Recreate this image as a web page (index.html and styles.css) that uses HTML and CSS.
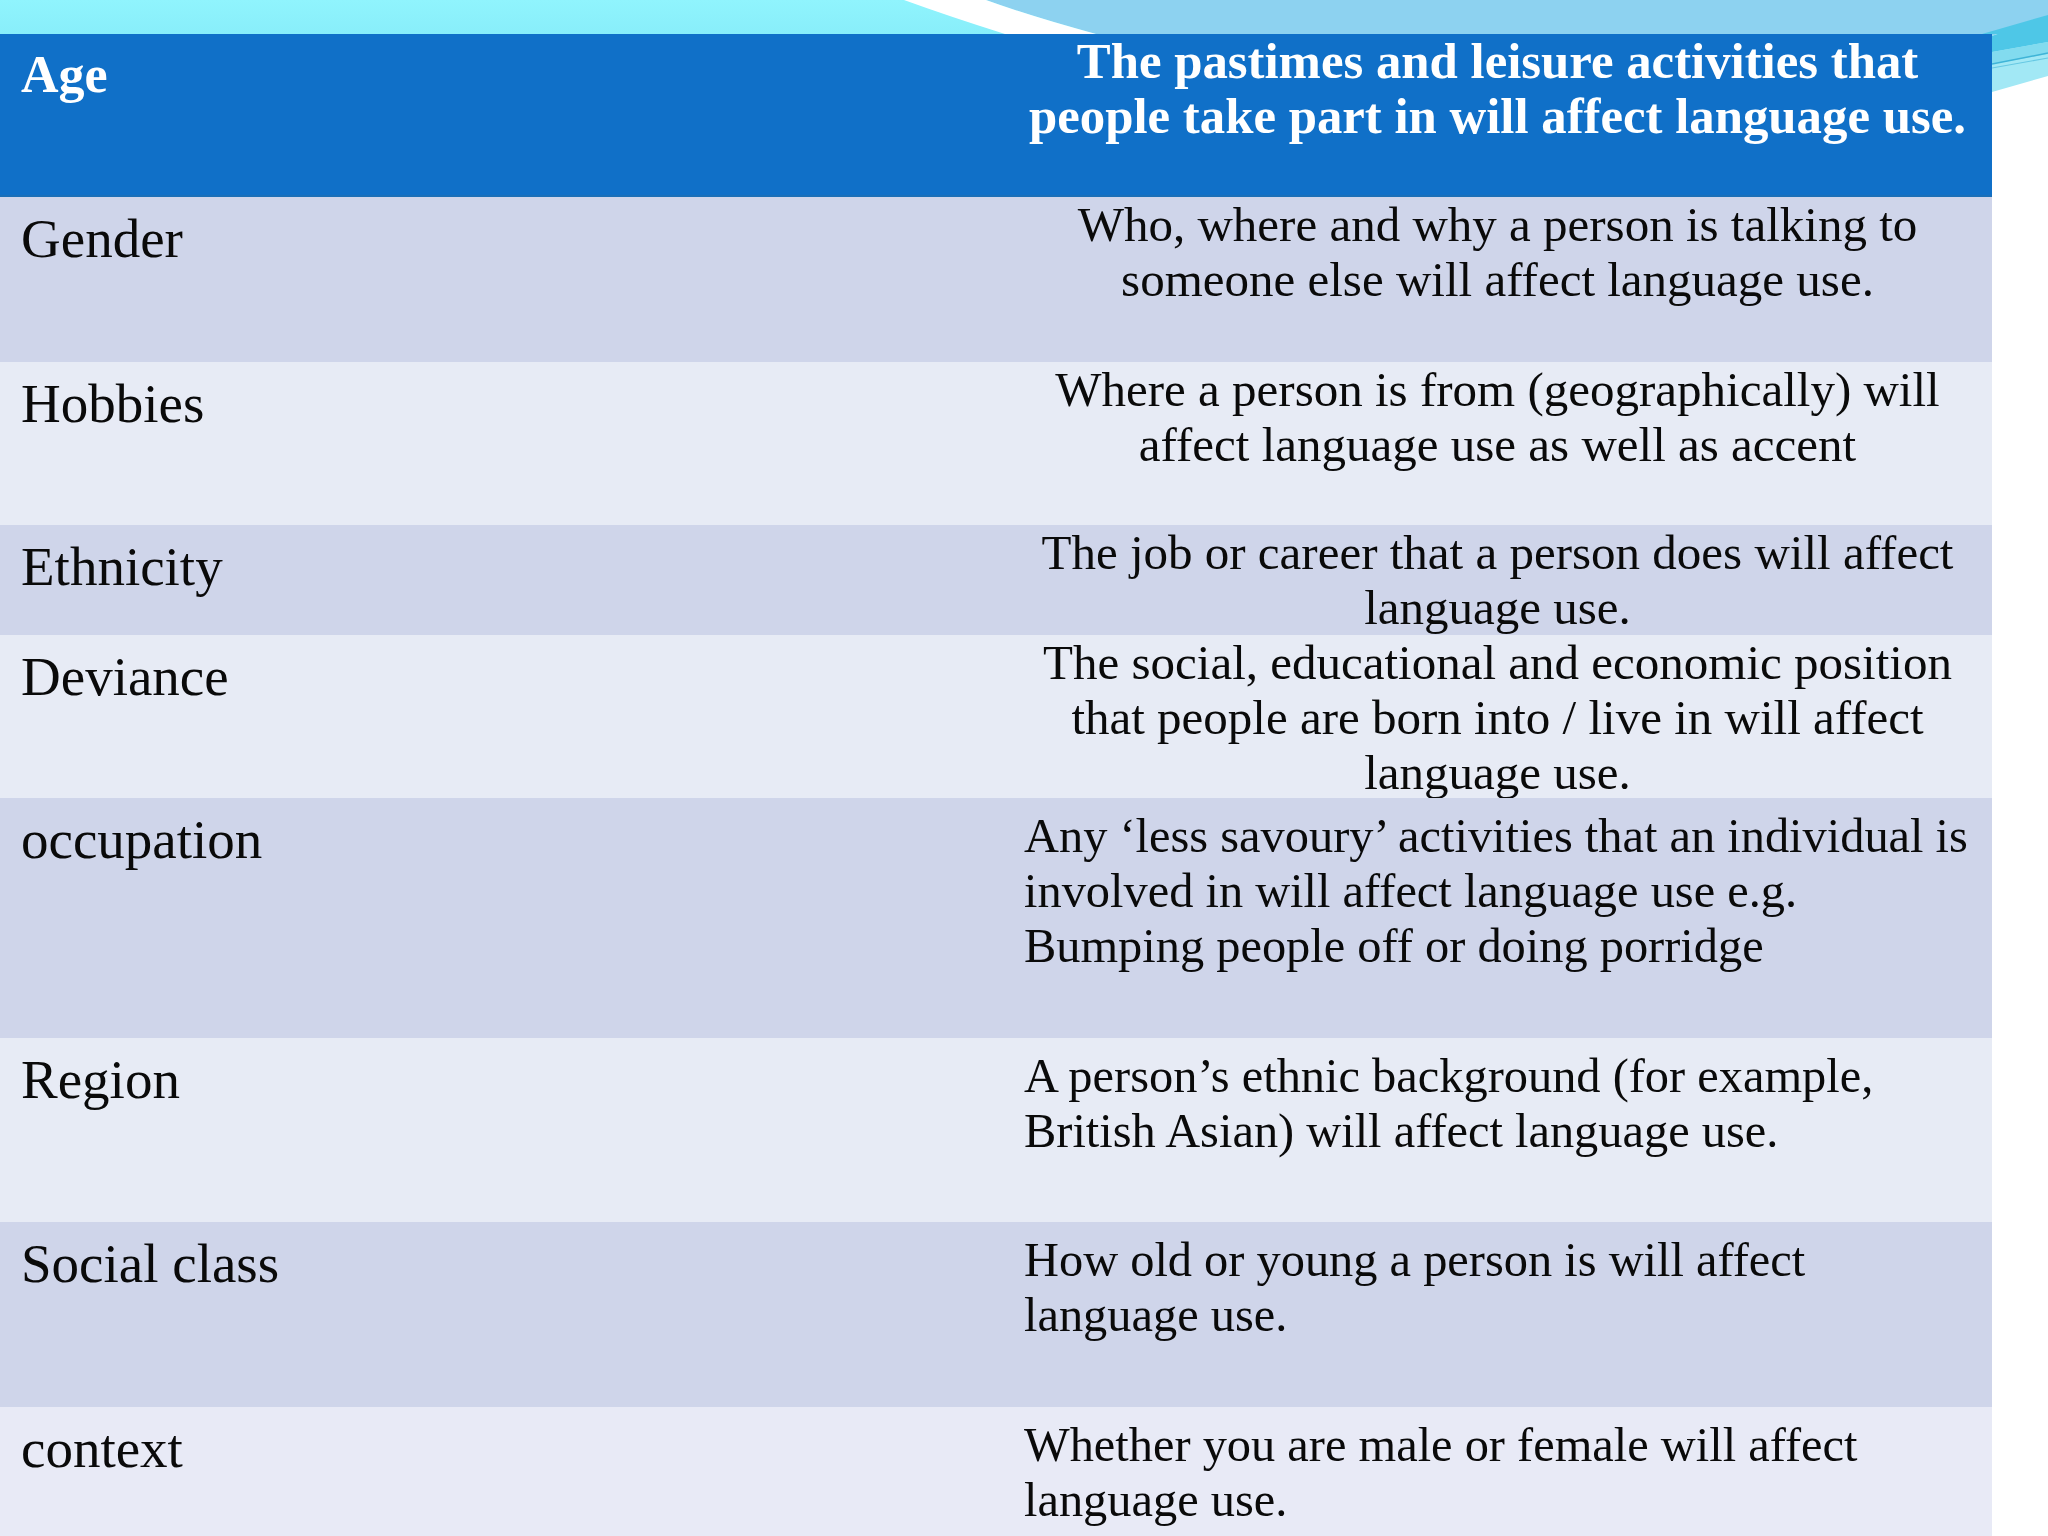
FILE: index.html
```html
<!DOCTYPE html>
<html lang="en">
<head>
<meta charset="utf-8">
<title>Language variation factors</title>
<link rel="stylesheet" href="styles.css">
</head>
<body>
<div class="page">
  <div class="top">
    <svg class="top-art" width="2048" height="34" viewBox="0 0 2048 34">
      <defs>
        <linearGradient id="cy" x1="0" y1="0" x2="0" y2="1">
          <stop offset="0" stop-color="#90f4fd"/>
          <stop offset="1" stop-color="#88eefa"/>
        </linearGradient>
      </defs>
      <rect x="0" y="0" width="2048" height="34" fill="url(#cy)"/>
      <path d="M986,0 L2048,0 L2048,34 L1096,34 Q1030,16 986,0 Z" fill="#8dd2f0"/>
      <path d="M904,0 L986,0 Q1030,16 1096,34 L1005,34 Q948,16 904,0 Z" fill="#ffffff"/>
      <path d="M1982,34 L2048,15 L2048,34 Z" fill="#4ec7e7"/>
    </svg>
  </div>
  <div class="main">
    <div class="table">
      <div class="row head h163">
        <div class="cell key">Age</div>
        <div class="cell val center">The pastimes and leisure activities that<br>people take part in will affect language use.</div>
      </div>
      <div class="row dark h165">
        <div class="cell key">Gender</div>
        <div class="cell val center">Who, where and why a person is talking to<br>someone else will affect language use.</div>
      </div>
      <div class="row light h163">
        <div class="cell key">Hobbies</div>
        <div class="cell val center">Where a person is from (geographically) will<br>affect language use as well as accent</div>
      </div>
      <div class="row dark h110">
        <div class="cell key">Ethnicity</div>
        <div class="cell val center">The job or career that a person does will affect<br>language use.</div>
      </div>
      <div class="row light h163">
        <div class="cell key">Deviance</div>
        <div class="cell val center">The social, educational and economic position<br>that people are born into / live in will affect<br>language use.</div>
      </div>
      <div class="row dark h240">
        <div class="cell key">occupation</div>
        <div class="cell val left">Any ‘less savoury’ activities that an individual is<br>involved in will affect language use e.g.<br>Bumping people off or doing porridge</div>
      </div>
      <div class="row light h184">
        <div class="cell key">Region</div>
        <div class="cell val left">A person’s ethnic background (for example,<br>British Asian) will affect language use.</div>
      </div>
      <div class="row dark h185">
        <div class="cell key">Social class</div>
        <div class="cell val left">How old or young a person is will affect<br>language use.</div>
      </div>
      <div class="row lighter h140">
        <div class="cell key">context</div>
        <div class="cell val left">Whether you are male or female will affect<br>language use.</div>
      </div>
    </div>
    <div class="side">
      <svg class="side-art" width="56" height="80" viewBox="0 0 56 80">
        <path d="M0,0 L56,0 L56,-18 L0,2 Z" fill="#8dd2f0"/>
        <path d="M0,2 L56,-18 L56,42 L0,58 Z" fill="#a2e8f5"/>
        <path d="M0,2 L56,-18 L56,8 L0,18 Z" fill="#4ec7e7"/>
        <path d="M0,18 L56,8 L56,20 L0,30 Z" fill="#82dbef"/>
        <path d="M0,30 L56,19" stroke="#3fb4d7" stroke-width="1.5" fill="none"/>
        <path d="M0,34 L56,24" stroke="#66c8e3" stroke-width="1.2" fill="none"/>
      </svg>
    </div>
  </div>
</div>
</body>
</html>
```

FILE: styles.css
```css
html, body {
  margin: 0;
  padding: 0;
  background: #ffffff;
}

.page {
  width: 2048px;
  height: 1536px;
  overflow: hidden;
  font-family: "Liberation Serif", "Times New Roman", serif;
  color: #0a0a0a;
}

.top {
  height: 34px;
  overflow: hidden;
}

.top-art,
.side-art {
  display: block;
}

.main {
  display: flex;
  align-items: flex-start;
}

.table {
  width: 1992px;
  display: flex;
  flex-direction: column;
}

.side {
  width: 56px;
  flex: none;
}

.row {
  display: grid;
  grid-template-columns: 1003px 989px;
}

.h110 { height: 110px; }
.h140 { height: 140px; }
.h163 { height: 163px; }
.h165 { height: 165px; }
.h184 { height: 184px; }
.h185 { height: 185px; }
.h240 { height: 240px; }

.head {
  background: #1070c8;
  color: #ffffff;
  box-shadow: inset 0 -2px 0 #1a6fb8;
}

.dark { background: #cfd5ea; }
.light { background: #e7ebf5; }
.lighter { background: #e8eaf6; }

.cell {
  white-space: nowrap;
}

.key {
  padding: 9px 0 0 21px;
  font-size: 55px;
  line-height: 66px;
}

.head .key {
  font-weight: bold;
  font-size: 52px;
  padding-top: 8px;
}

.val {
  font-size: 49px;
  line-height: 55px;
}

.head .val {
  font-weight: bold;
  font-size: 50.8px;
}

.center {
  text-align: center;
  padding-top: 0;
}

.left {
  text-align: left;
  font-size: 48.4px;
  padding: 10px 0 0 21px;
}
```
